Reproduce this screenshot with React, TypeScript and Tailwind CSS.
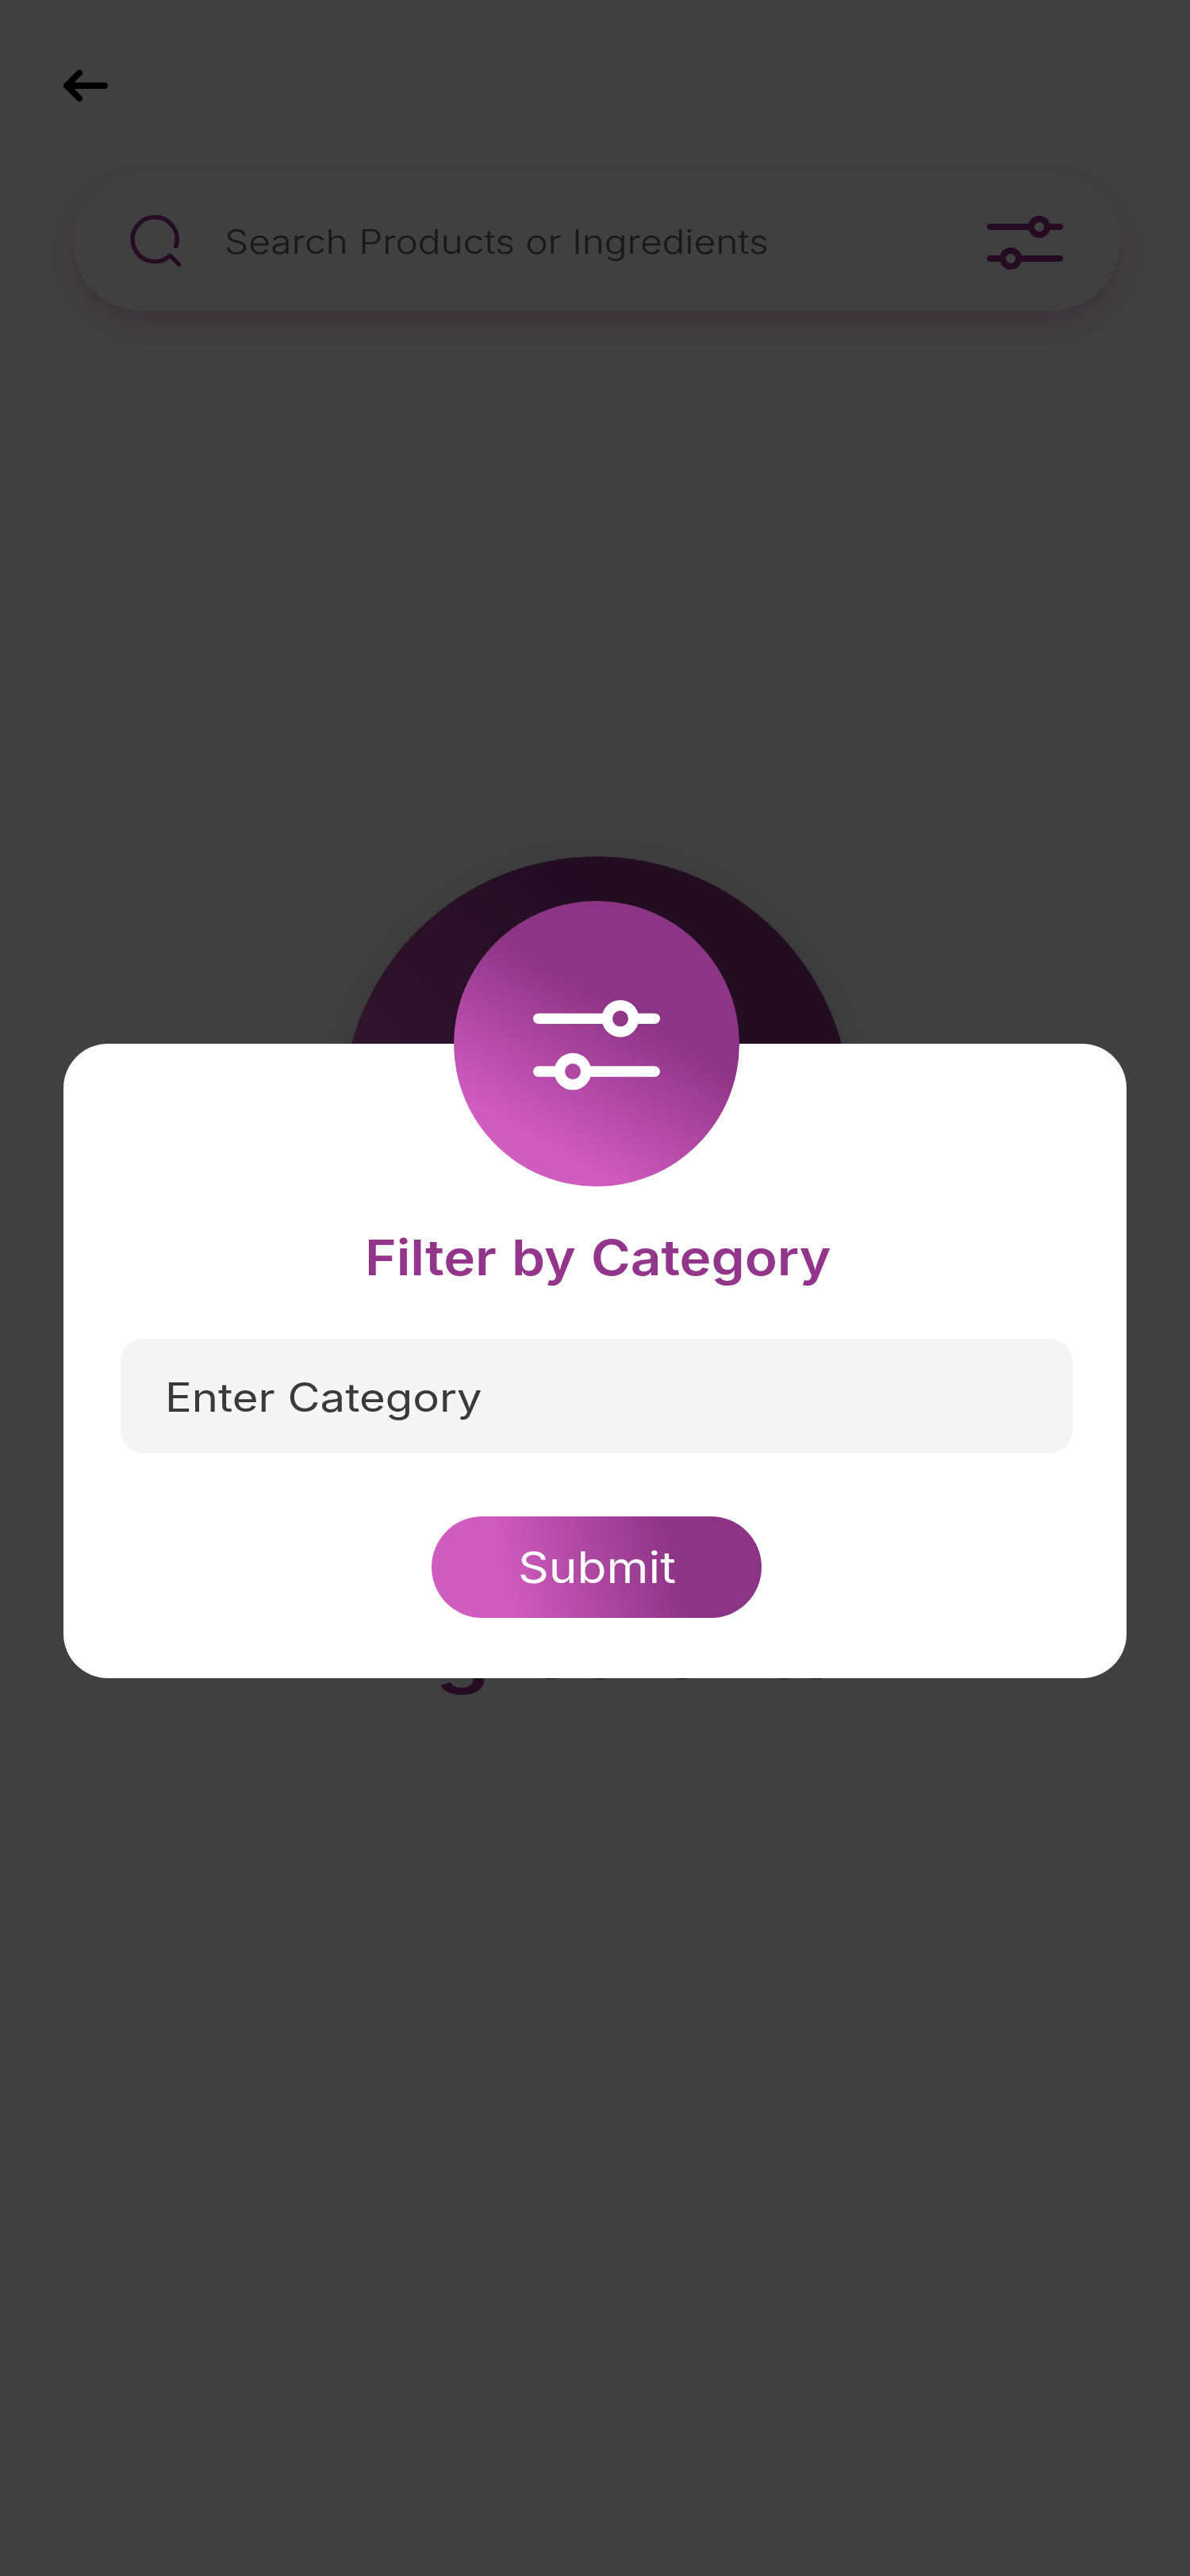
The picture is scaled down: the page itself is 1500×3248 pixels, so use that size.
function FilterIcon({ className }: { className?: string }) {
  return (
    <svg viewBox="0 0 96 68" fill="none" stroke="currentColor" strokeWidth="8" strokeLinecap="round" className={className}>
      <path d="M4 14H54M78 14H92M4 54H18M42 54H92" />
      <circle cx="66" cy="14" r="10" />
      <circle cx="30" cy="54" r="10" />
    </svg>
  );
}

function SearchIcon({ className }: { className?: string }) {
  return (
    <svg viewBox="0 0 68 68" fill="none" stroke="currentColor" strokeWidth="5.4" strokeLinecap="round" strokeLinejoin="round" className={className}>
      <path d="M60.7 40.6A28 28 0 1 0 53.3 52.2L64.7 63.6" />
    </svg>
  );
}

function BackArrow() {
  return (
    <svg viewBox="0 0 56 40" fill="none" stroke="currentColor" strokeWidth="8" strokeLinecap="round" strokeLinejoin="round" className="h-10 w-14 text-black">
      <path d="M20 4L4 20L20 36M4 20H52" />
    </svg>
  );
}

function SearchPage() {
  return (
    <div className="flex h-full flex-col items-start">
      <button aria-label="Back" className="mt-[88px] ml-20">
        <BackArrow />
      </button>

      <div className="mt-[88px] ml-[92px] flex h-44 w-[1320px] items-center rounded-full bg-white pr-[72px] pl-[69px] text-[#98318c] shadow-[0_16px_32px_rgba(160,50,110,0.26)]">
        <SearchIcon className="h-[68px] w-[68px] shrink-0" />
        <span className="mt-0.5 ml-[54px] origin-left scale-x-[1.137] text-[42px] leading-none font-light whitespace-nowrap text-[#606060]">
          Search Products or Ingredients
        </span>
        <FilterIcon className="mt-1 ml-auto h-[68px] w-24 shrink-0" />
      </div>

      <div className="mt-[688px] ml-[432px] h-[640px] w-[640px] rounded-full bg-[linear-gradient(45deg,#d15cc0_15%,#8c3485_72%)] shadow-[0_8px_40px_rgba(0,0,0,0.2)]" />

      <div className="mt-[303px] ml-1 flex w-full justify-center">
        <span className="scale-x-[1.164] text-[96px] leading-[116px] font-semibold text-[#98318c]">Ingredients</span>
      </div>
    </div>
  );
}

function FilterDialog() {
  return (
    <div role="dialog" className="relative flex h-[800px] w-[1340px] flex-col items-center rounded-[56px] bg-white">
      <div className="absolute -top-[180px] left-[492px] flex h-[360px] w-[360px] items-center justify-center rounded-full bg-[linear-gradient(30deg,#d15cc0_20%,#8c3485_62%)] text-white">
        <FilterIcon className="mt-1 h-[113.3px] w-40" />
      </div>

      <h2 className="mt-[230px] ml-2 scale-x-[1.089] text-[62px] leading-[80px] font-semibold text-[#93358a] [word-spacing:2px]">
        Filter by Category
      </h2>

      <div className="mt-[62px] ml-1 flex h-36 w-[1200px] items-center rounded-[28px] bg-[#f5f5f5] pl-14">
        <span className="mt-1 origin-left scale-x-[1.124] text-[50px] leading-none font-normal text-[#3a3a3a]">Enter Category</span>
      </div>

      <button className="mt-20 ml-1 flex h-32 w-[416px] items-center justify-center rounded-full bg-[linear-gradient(77deg,#d15cc0_21.6%,#8c3485_74%)] text-white">
        <span className="scale-x-[1.1] text-[55px] leading-none">Submit</span>
      </button>
    </div>
  );
}

export default function App() {
  return (
    <main className="relative h-[3248px] w-[1500px] overflow-hidden bg-white font-['Inter',sans-serif]">
      <SearchPage />
      <div className="absolute inset-0 flex flex-col items-center bg-black/75 pt-[1316px]">
        <FilterDialog />
      </div>
    </main>
  );
}
